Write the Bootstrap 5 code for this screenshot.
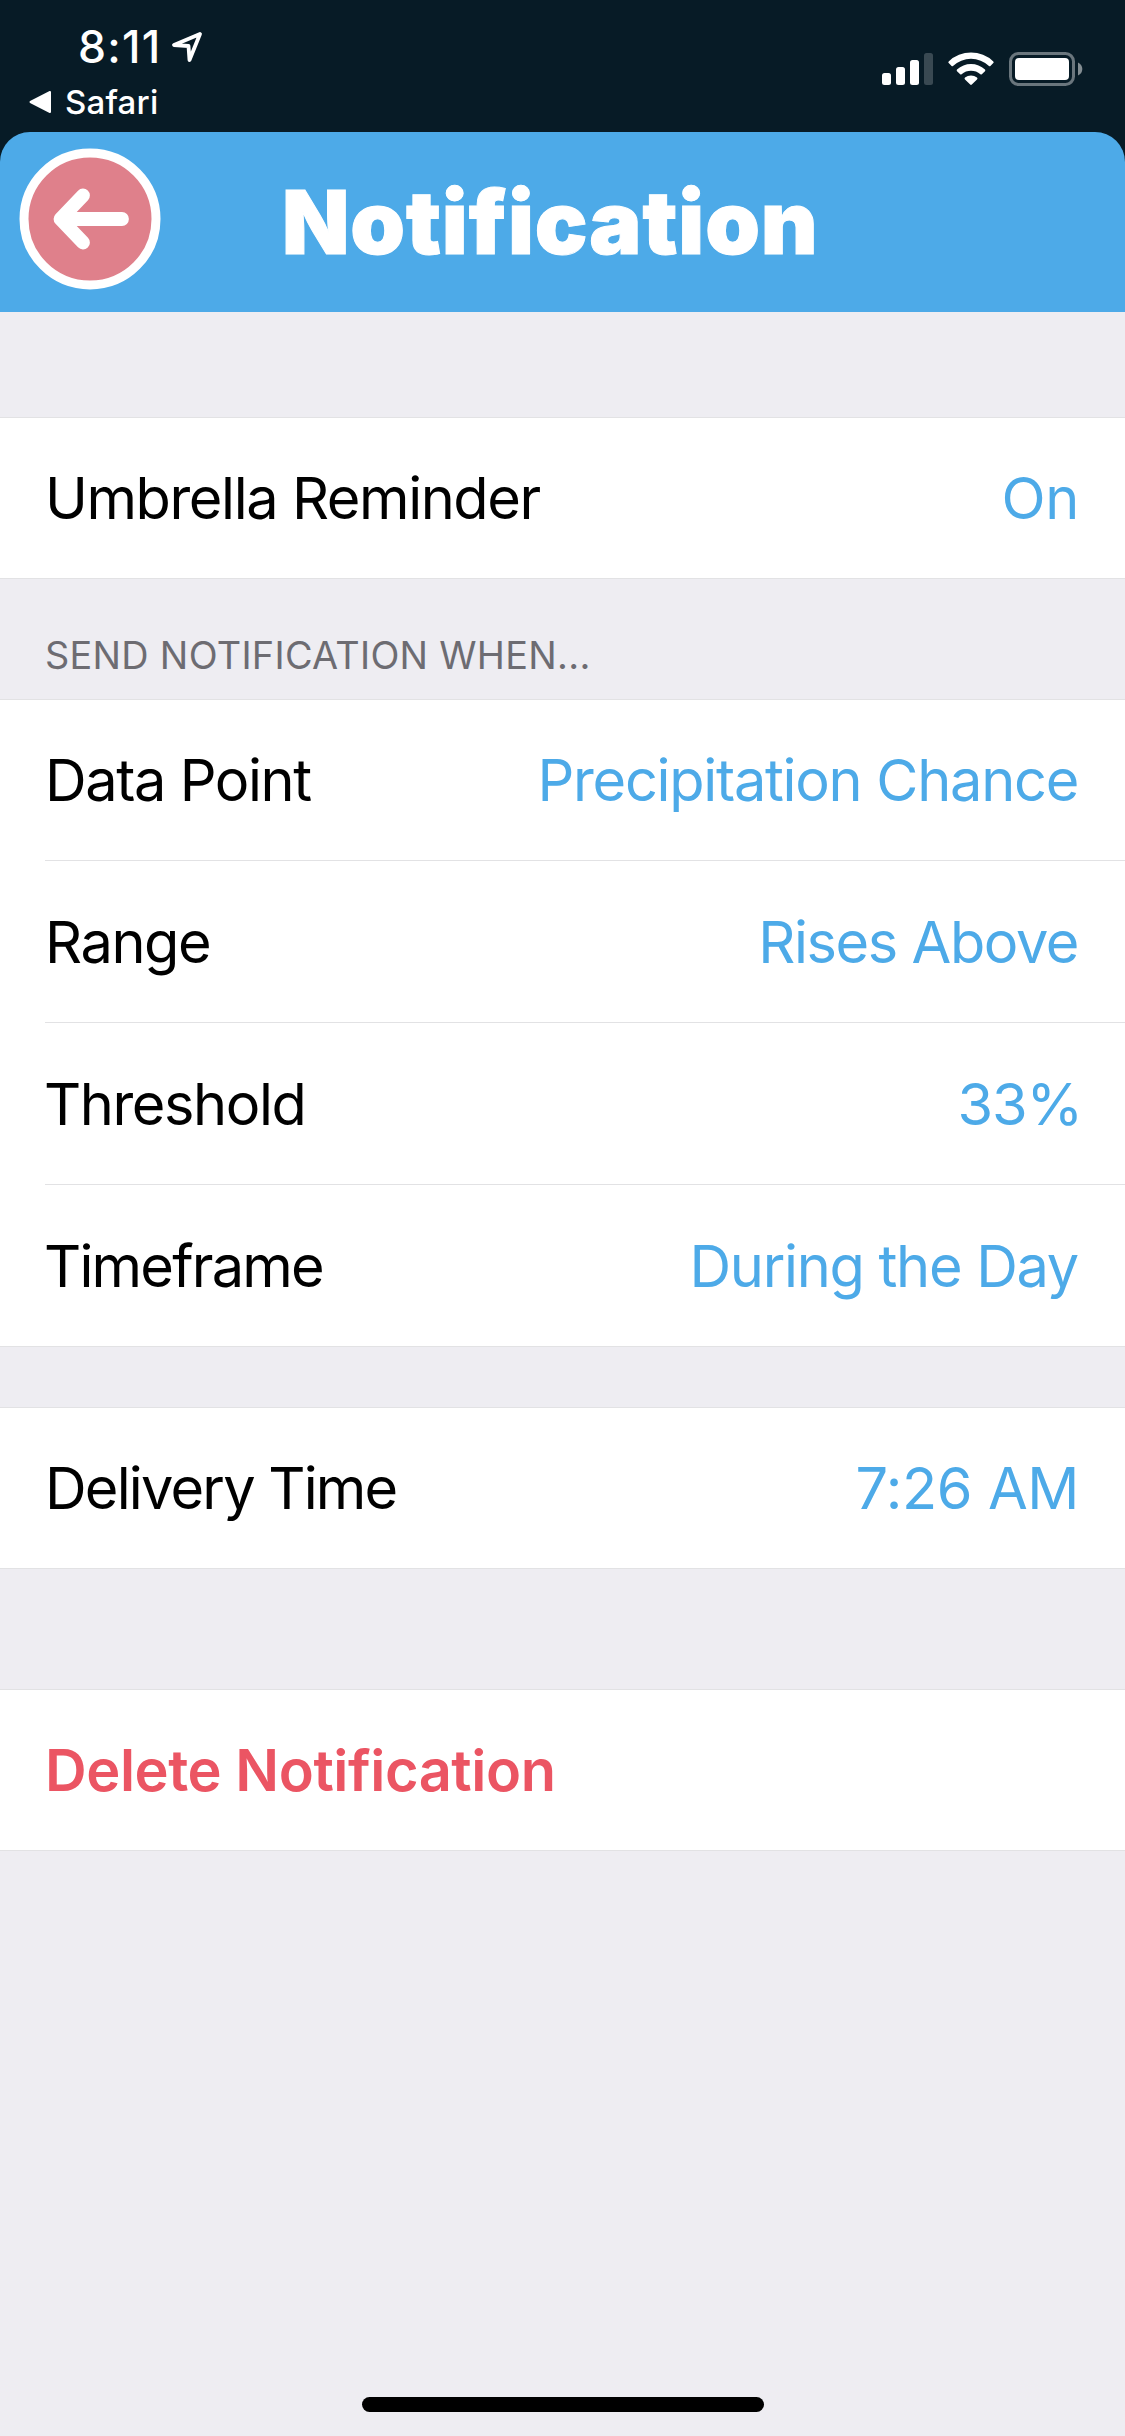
<!DOCTYPE html>
<html lang="en">
<head>
<meta charset="utf-8">
<meta name="viewport" content="width=device-width, initial-scale=1">
<title>Notification</title>
<link href="https://cdn.jsdelivr.net/npm/bootstrap@5.3.0/dist/css/bootstrap.min.css" rel="stylesheet">
<style>
  body { background: #eeedf2; font-family: Inter, "Liberation Sans", sans-serif; color: #000; }
  .phone { width: 1125px; height: 2436px; background: #eeedf2; }
  .status-area { height: 162px; margin-bottom: -30px; background: #071b26; color: #fff; }
  .status-left { padding-left: 78px; padding-top: 20px; }
  .clock { font-size: 44.500px; line-height: 54px; font-weight: 550; letter-spacing: 1.3px; }
  .loc-icon { margin-top: 11px; margin-left: 9px; }
  .back-app { padding-left: 29px; font-size: 33px; line-height: 40px; font-weight: 450; gap: 13px; margin-top: 8px; letter-spacing: .2px; }
  .status-right { padding-top: 51px; padding-right: 42px; }
  .title-bar { height: 180px; background: #4daae8; border-radius: 30px 30px 0 0; padding-left: 19px; }
  .title-text { font-size: 87.6px; font-weight: 900; line-height: 106px; color: #fff; margin: 37px 0 0 121px; letter-spacing: .9px; -webkit-text-stroke: 1px #fff; }
  .back-btn { margin-top: 16px; }
  .group { border-top: 1px solid #e2e2e4; border-bottom: 1px solid #e2e2e4; border-radius: 0; }
  .first-group { margin-top: 105px; }
  .item { --bs-list-group-border-width: 0; background: #fff; color: #000; height: 160px; font-size: 57.7px; line-height: 70px; padding: 0 47px 0 45px; white-space: nowrap; letter-spacing: -1.42px; }
  .item + .item { height: 162px; padding-top: 2px; }
  .item + .item::before { content: ""; position: absolute; left: 45px; right: 0; top: 0; height: 1px; background: #e2e2e4; }
  .tight { letter-spacing: -1.8px; }
  .from-t { margin-left: -1px; }
  .val { color: #4daae8; }
  .val-long { letter-spacing: -1.28px; }
  .val-short { letter-spacing: -.4px; margin-right: -1px; }
  .val-percent { letter-spacing: -1.1px; margin-right: -4px; }
  .section-head { height: 120px; padding: 0 45px 21px; color: #6d6c72; font-size: 37.8px; line-height: 46px; letter-spacing: .3px; }
  .gap-s { margin-top: 60px; }
  .gap-l { margin-top: 120px; }
  .delete-item { color: #eb5563; font-weight: 600; letter-spacing: -.44px; }
  .home-bar { width: 402px; height: 15px; border-radius: 8px; background: #000; margin-bottom: 24px; }
</style>
</head>
<body>
<div class="phone d-flex flex-column overflow-hidden">
  <div class="status-area d-flex justify-content-between flex-shrink-0">
    <div>
      <div class="status-left d-flex align-items-start">
        <span class="clock">8:11</span>
        <svg class="loc-icon" width="32" height="32" viewBox="0 0 32 32" fill="none" stroke="#fff" stroke-width="3.8" stroke-linejoin="round"><path d="M29 3 3 14 17.500 15 18.500 29Z"/></svg>
      </div>
      <div class="back-app d-flex align-items-center">
        <svg width="23" height="24" viewBox="0 0 23 24" fill="#fff" stroke="#fff" stroke-width="2" stroke-linejoin="round"><path d="M1.500 12 21 2V22Z"/></svg>
        <span>Safari</span>
      </div>
    </div>
    <div class="status-right">
      <svg width="202" height="36" viewBox="881 51 202 36" fill="#fff">
        <rect x="882" y="73" width="9" height="12" rx="2.500"/>
        <rect x="896" y="67" width="9" height="18" rx="2.500"/>
        <rect x="910" y="60" width="9" height="25" rx="2.500"/>
        <rect x="924" y="53" width="9" height="32" rx="2.500" fill="#394952"/>
        <path d="M948.700 61.400A32.500 32.500 0 0 1 993.300 61.400Q994 62.200 993.300 63L990.400 65.900Q989.700 66.500 989 65.900A26.500 26.500 0 0 0 953 65.900Q952.300 66.500 951.600 65.900L948.700 63Q948 62.200 948.700 61.400Z"/>
        <path d="M957 69.600A20.500 20.500 0 0 1 985 69.600Q985.700 70.400 985 71.200L981.800 74.200Q981.100 74.700 980.400 74.200A14.500 14.500 0 0 0 961.600 74.200Q960.900 74.700 960.200 74.200L957 71.200Q956.300 70.400 957 69.600Z"/>
        <path d="M965 77.600A9.500 9.500 0 0 1 977 77.600Q978 78.500 977 79.400L971.800 84.500Q971 85.300 970.200 84.500L965 79.400Q964 78.500 965 77.600Z"/>
        <rect x="1010.500" y="53.500" width="63" height="31" rx="8" fill="none" stroke="#6a767d" stroke-width="3"/>
        <rect x="1015" y="58" width="54" height="22" rx="4"/>
        <path d="M1078 62.500Q1082.300 64.500 1082.300 69T1078 75.500Z" fill="#838d92"/>
      </svg>
    </div>
  </div>

  <header class="title-bar d-flex align-items-start flex-shrink-0">
    <svg class="back-btn" width="142" height="142" viewBox="0 0 142 142">
      <circle cx="71" cy="71" r="66" fill="#df808b" stroke="#fff" stroke-width="9"/>
      <path d="M64 47.500 41.500 71 64 94.500M43 71H103" fill="none" stroke="#fff" stroke-width="13.800" stroke-linecap="round" stroke-linejoin="round"/>
    </svg>
    <h1 class="title-text">Notification</h1>
  </header>

  <div class="list-group group first-group">
    <div class="list-group-item item d-flex justify-content-between align-items-center"><span>Umbrella Reminder</span><span class="val val-short">On</span></div>
  </div>

  <div class="section-head d-flex align-items-end flex-shrink-0"><span>SEND NOTIFICATION WHEN...</span></div>

  <div class="list-group group">
    <div class="list-group-item item d-flex justify-content-between align-items-center"><span>Data Point</span><span class="val val-long">Precipitation Chance</span></div>
    <div class="list-group-item item d-flex justify-content-between align-items-center"><span>Range</span><span class="val">Rises Above</span></div>
    <div class="list-group-item item d-flex justify-content-between align-items-center"><span class="from-t">Threshold</span><span class="val val-percent">33%</span></div>
    <div class="list-group-item item d-flex justify-content-between align-items-center"><span class="tight from-t">Timeframe</span><span class="val val-long">During the Day</span></div>
  </div>

  <div class="list-group group gap-s">
    <div class="list-group-item item d-flex justify-content-between align-items-center"><span class="tight">Delivery Time</span><span class="val val-short">7:26 AM</span></div>
  </div>

  <div class="list-group group gap-l">
    <div class="list-group-item item delete-item d-flex align-items-center"><span>Delete Notification</span></div>
  </div>

  <div class="home-bar mt-auto mx-auto flex-shrink-0"></div>
</div>
<script src="https://cdn.jsdelivr.net/npm/bootstrap@5.3.0/dist/js/bootstrap.bundle.min.js"></script>
</body>
</html>
